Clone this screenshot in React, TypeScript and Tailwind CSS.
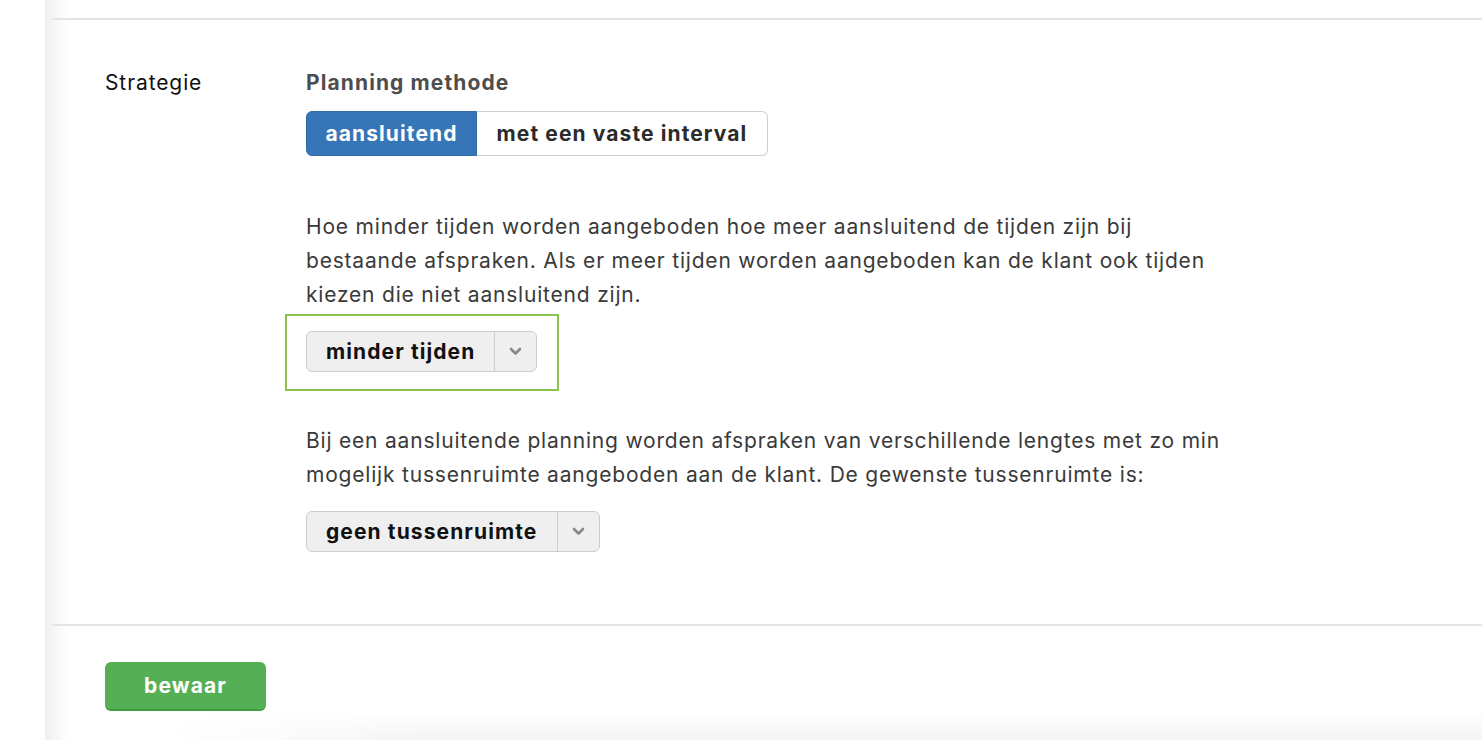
import React from 'react'

const font = { fontFamily: 'Inter, "Noto Sans", "Liberation Sans", sans-serif' }

function Chevron() {
  return (
    <svg width="13" height="9" viewBox="0 0 13 9" fill="none">
      <polyline points="2,2 6.5,6.5 11,2" stroke="#888" strokeWidth="2.6" strokeLinecap="round" strokeLinejoin="round" />
    </svg>
  )
}

function Select({ label, textWidth }: { label: string; textWidth: string }) {
  return (
    <div className="inline-flex h-[41px] rounded-md border border-[#cdcdcd] bg-[#efefef]">
      <div className={`${textWidth} flex items-center pl-[19px] text-[21px] font-bold tracking-[1.1px] text-[#111]`}>{label}</div>
      <div className="w-[42px] flex items-center justify-center border-l border-[#cdcdcd]">
        <Chevron />
      </div>
    </div>
  )
}

export default function App() {
  return (
    <div className="w-full h-[740px] bg-white flex overflow-hidden" style={font}>
      <div className="w-[45px] shrink-0 bg-white" />
      <div className="flex-1 relative bg-white shadow-[inset_24px_0_18px_-14px_rgba(0,0,0,0.07)]">
        <div className="h-[18px]" />
        <div className="ml-[7px] h-[2px] bg-[#e4e4e4]" />

        <div className="flex pl-[60px] pt-[46px] pb-[72px]">
          <div className="w-[201px] shrink-0 text-[21px] leading-[34px] tracking-[0.9px] text-[#111]">Strategie</div>
          <div className="w-[916px]">
            <div className="text-[21px] leading-[34px] font-bold tracking-[1.1px] text-[#4d4d4d]">Planning methode</div>

            <div className="mt-[11px] flex h-[45px]">
              <button className="w-[171px] h-full rounded-l-md bg-[#3776b6] border border-[#2f69a6] text-white text-[21px] font-bold tracking-[1.1px]">
                aansluitend
              </button>
              <button className="w-[291px] h-full rounded-r-md bg-white border border-l-0 border-[#cfcfcf] text-[#2b2b2b] text-[21px] font-bold tracking-[1.1px]">
                met een vaste interval
              </button>
            </div>

            <p className="mt-[54px] text-[21px] leading-[34px] tracking-[0.8px] text-[#3a3a3a]">
              Hoe minder tijden worden aangeboden hoe meer aansluitend de tijden zijn bij bestaande afspraken. Als er meer tijden worden aangeboden kan de klant ook tijden kiezen die niet aansluitend zijn.
            </p>

            <div className="mt-[2px] -ml-[21px] inline-flex border-2 border-[#8bc34a] pl-[19px] pr-[20px] pt-[15px] pb-[17px]">
              <Select label="minder tijden" textWidth="w-[187px]" />
            </div>

            <p className="mt-[33px] text-[21px] leading-[34px] tracking-[0.8px] text-[#3a3a3a]">
              Bij een aansluitende planning worden afspraken van verschillende lengtes met zo min mogelijk tussenruimte aangeboden aan de klant. De gewenste tussenruimte is:
            </p>

            <div className="mt-[19px]">
              <Select label="geen tussenruimte" textWidth="w-[250px]" />
            </div>
          </div>
        </div>

        <div className="ml-[7px] h-[2px] bg-[#e4e4e4]" />

        <div className="pl-[60px] pt-[36px]">
          <button className="w-[161px] h-[49px] rounded-md bg-[#55b055] border-b-2 border-[#3f9c3f] text-white text-[21px] font-bold tracking-[1.1px]">
            bewaar
          </button>
        </div>

        <div className="absolute left-[120px] right-0 bottom-0 h-[30px] bg-gradient-to-b from-transparent to-[#f4f4f4] [mask-image:linear-gradient(to_right,transparent,black_260px)]" />
      </div>
    </div>
  )
}
